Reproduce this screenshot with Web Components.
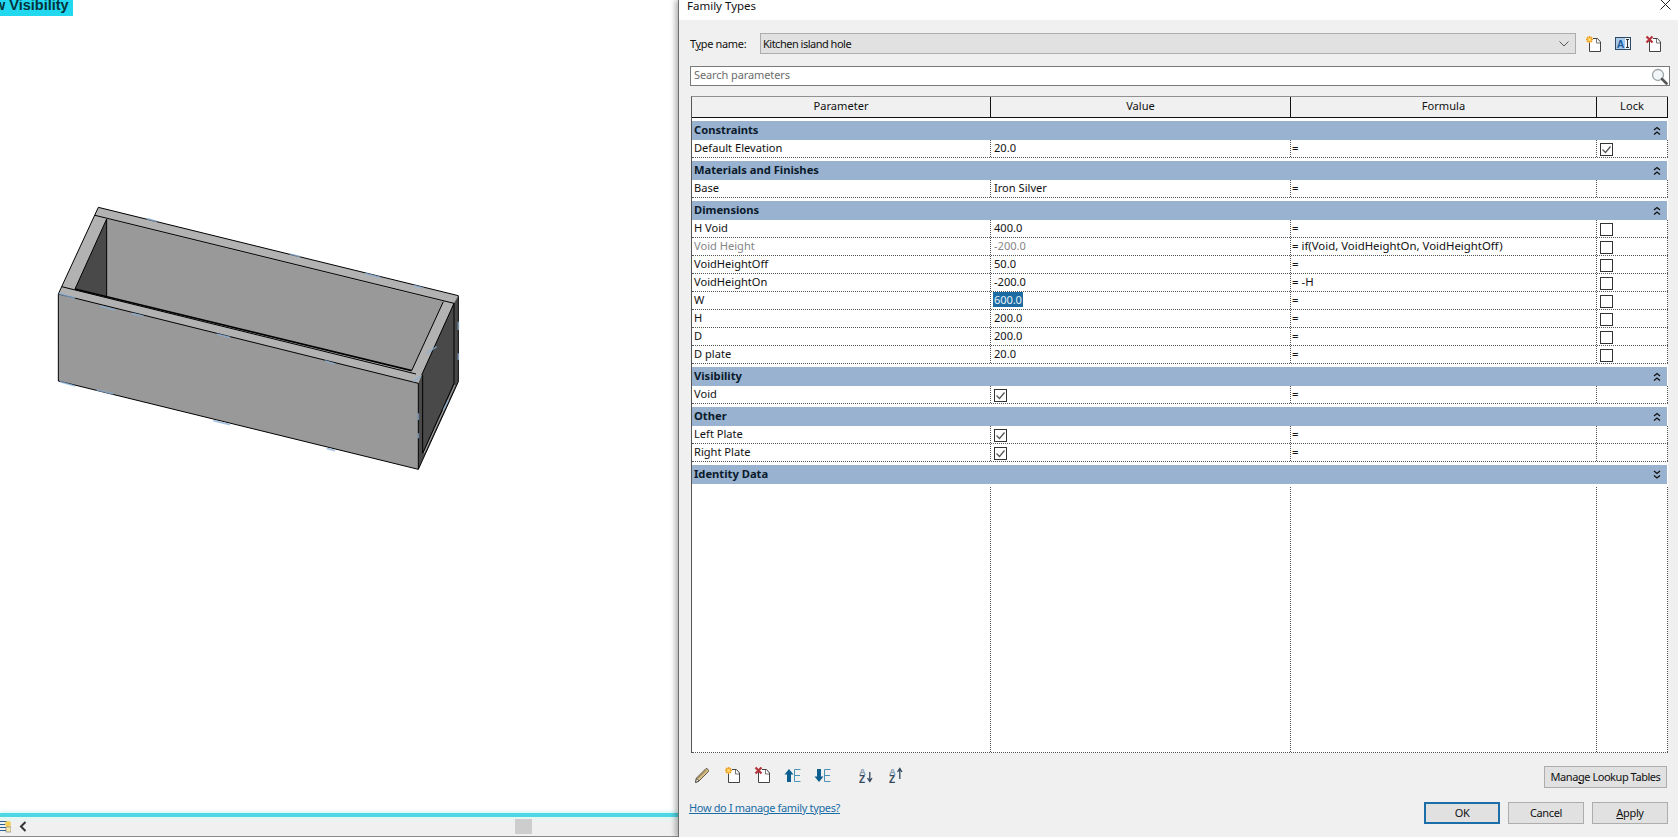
<!DOCTYPE html>
<html>
<head>
<meta charset="utf-8">
<title>Family Types</title>
<style>
  html, body { margin: 0; height: 100%; background: #fff; overflow: hidden; }
  body { font-family: "Noto Sans", "Open Sans", sans-serif; font-size: 11.100px; color: #111; }
</style>
</head>
<body>
<app-window>
  <model-view slot="left"></model-view>
  <family-types slot="right">
    <ft-group title="Constraints"></ft-group>
    <ft-row label="Default Elevation" value="20.0" formula="=" lock="on"></ft-row>
    <ft-group title="Materials and Finishes" class="next"></ft-group>
    <ft-row label="Base" value="Iron Silver" formula="=" lock="none"></ft-row>
    <ft-group title="Dimensions" class="next"></ft-group>
    <ft-row label="H Void" value="400.0" formula="=" lock="off"></ft-row>
    <ft-row label="Void Height" value="-200.0" formula="= if(Void, VoidHeightOn, VoidHeightOff)" lock="off" disabled></ft-row>
    <ft-row label="VoidHeightOff" value="50.0" formula="=" lock="off"></ft-row>
    <ft-row label="VoidHeightOn" value="-200.0" formula="= -H" lock="off"></ft-row>
    <ft-row label="W" value="600.0" formula="=" lock="off" selected></ft-row>
    <ft-row label="H" value="200.0" formula="=" lock="off"></ft-row>
    <ft-row label="D" value="200.0" formula="=" lock="off"></ft-row>
    <ft-row label="D plate" value="20.0" formula="=" lock="off"></ft-row>
    <ft-group title="Visibility" class="next"></ft-group>
    <ft-row label="Void" check formula="=" lock="none"></ft-row>
    <ft-group title="Other" class="next"></ft-group>
    <ft-row label="Left Plate" check formula="=" lock="none"></ft-row>
    <ft-row label="Right Plate" check formula="=" lock="none"></ft-row>
    <ft-group title="Identity Data" class="next" collapsed></ft-group>
  </family-types>
</app-window>

<script>
const ICONS = {
  add: `<svg width="16" height="18" viewBox="0 0 16 18"><path d="M4.500 5.500V16.500H15.500V7L12.500 3.500H8" fill="#fff" stroke="#444"/><path d="M11.500 4V8H15" fill="none" stroke="#777"/><g stroke="#f0a01e" stroke-width="1.500"><path d="M1 4.500H8M4.500 1V8M2 2L7 7M7 2L2 7"/></g><circle cx="4.500" cy="4.500" r="1.500" fill="#ffe070"/></svg>`,
  remove: `<svg width="16" height="18" viewBox="0 0 16 18"><path d="M4.500 5.500V16.500H15.500V7L12.500 3.500H8" fill="#fff" stroke="#444"/><path d="M11.500 4V8H15" fill="none" stroke="#777"/><path d="M1.500 1.500L7.500 7.500M7.500 1.500L1.500 7.500" stroke="#b5343c" stroke-width="2.200"/></svg>`,
  rename: `<svg width="16" height="14" viewBox="0 0 16 14"><rect x=".5" y=".5" width="15" height="12" fill="#a9c9ea" stroke="#2c4a66"/><rect x="10" y="1" width="5" height="11" fill="#eef3f8"/><text x="1.800" y="10.800" font-family="Liberation Sans" font-weight="700" font-size="10.500" fill="#1a5c9c">A</text><path d="M11 2.500H14M12.500 2.500V10.500M11 10.500H14" stroke="#333" fill="none"/></svg>`,
  search: `<svg width="17" height="17" viewBox="0 0 17 17"><circle cx="7" cy="7" r="5.500" fill="#f2f6f8" stroke="#9aa3a8" stroke-width="1.300"/><path d="M11 11L15.500 15.500" stroke="#555" stroke-width="2.600" stroke-linecap="round"/></svg>`,
  pencil: `<svg width="16" height="17" viewBox="0 0 16 17"><path d="M1.500 15.500L2.500 11L12 1.500C13 1 15 3 14.500 4.500L5 14Z" fill="#d8bf86" stroke="#5f5a50"/><path d="M2.500 11L5 14L1.500 15.500Z" fill="#efe6d2" stroke="#5f5a50"/><path d="M4 11L12.500 3" stroke="#8e7a4c"/></svg>`,
  up: `<svg width="17" height="15" viewBox="0 0 17 15"><path d="M5 1L9.500 6.500H7V14H3V6.500H.5Z" fill="#0c5f8e"/><path d="M16.500 1.500H10.500V13.500H16.500M10.500 7.500H16" fill="none" stroke="#4a93b8"/></svg>`,
  down: `<svg width="17" height="15" viewBox="0 0 17 15"><path d="M5 14L9.500 8.500H7V1H3V8.500H.5Z" fill="#0c5f8e"/><path d="M16.500 1.500H10.500V13.500H16.500M10.500 7.500H16" fill="none" stroke="#4a93b8"/></svg>`,
  az: `<svg width="14" height="22" viewBox="0 -3 14 22"><text x="0" y="7.500" font-family="Liberation Sans" font-weight="700" font-size="9.500" fill="#7e97ad">A</text><text x="0" y="15.800" font-family="Liberation Sans" font-weight="700" font-size="10" fill="#33485c">Z</text><path d="M10.800 5V14M8.500 11L10.800 14.500L13 11" fill="none" stroke="#33485c" stroke-width="1.300"/></svg>`,
  za: `<svg width="14" height="22" viewBox="0 -3 14 22"><text x="0" y="7.500" font-family="Liberation Sans" font-weight="700" font-size="9.500" fill="#7e97ad">A</text><text x="0" y="15.800" font-family="Liberation Sans" font-weight="700" font-size="10" fill="#33485c">Z</text><path d="M10.800 12V2M8.500 5L10.800 1.500L13 5" fill="none" stroke="#33485c" stroke-width="1.300"/></svg>`
};

class FtIcon extends HTMLElement {
  constructor() {
    super();
    this.attachShadow({mode: 'open'});
  }
  connectedCallback() {
    this.shadowRoot.innerHTML = `
      <style>
        :host { display: flex; align-items: center; justify-content: center; width: 30px; height: 22px; }
        svg { display: block; }
      </style>
      ${ICONS[this.getAttribute('name')]}
    `;
  }
}
customElements.define('ft-icon', FtIcon);

class FtCheck extends HTMLElement {
  constructor() {
    super();
    this.attachShadow({mode: 'open'});
  }
  connectedCallback() {
    const tick = this.hasAttribute('checked')
      ? '<path d="M2.500 6.500L5.500 9.500L10.500 3.500" fill="none" stroke="#555" stroke-width="1.300"/>' : '';
    this.shadowRoot.innerHTML = `
      <style>
        :host { display: block; width: 13px; height: 13px; margin-top: 4px; }
        svg { display: block; }
      </style>
      <svg width="13" height="13" viewBox="0 0 13 13"><rect x=".5" y=".5" width="12" height="12" fill="#fff" stroke="#333"/>${tick}</svg>
    `;
  }
}
customElements.define('ft-check', FtCheck);

class FtGroup extends HTMLElement {
  constructor() {
    super();
    this.attachShadow({mode: 'open'});
  }
  connectedCallback() {
    const d = this.hasAttribute('collapsed')
      ? 'M1 1L4 3.500L7 1M1 5.500L4 8L7 5.500'
      : 'M1 4L4 1.500L7 4M1 8.500L4 6L7 8.500';
    this.shadowRoot.innerHTML = `
      <style>
        :host {
          display: flex; align-items: center; justify-content: space-between;
          height: 19px; background: #98b2cf; padding: 0 6px 0 2px; box-sizing: border-box;
          font-weight: 700; font-size: 11.200px; color: #0b1a2b; line-height: 16px; margin-right: 1px;
        }
        :host(.next) { margin-top: 3px; }
        span { margin-top: -2px; }
        svg { display: block; }
      </style>
      <span>${this.getAttribute('title')}</span>
      <svg width="8" height="10" viewBox="0 0 8 10"><path d="${d}" fill="none" stroke="#111" stroke-width="1.300"/></svg>
    `;
  }
}
customElements.define('ft-group', FtGroup);

class FtRow extends HTMLElement {
  constructor() {
    super();
    this.attachShadow({mode: 'open'});
  }
  connectedCallback() {
    const lock = this.getAttribute('lock');
    let value = this.getAttribute('value') || '';
    if (this.hasAttribute('selected')) value = `<span class="sel">${value}</span>`;
    if (this.hasAttribute('check')) value = '<ft-check checked></ft-check>';
    const lockBox = lock === 'none' ? '' : `<ft-check ${lock === 'on' ? 'checked' : ''}></ft-check>`;
    this.shadowRoot.innerHTML = `
      <style>
        :host {
          display: grid; grid-template-columns: var(--ft-cols); height: 18px;
          border-bottom: 1px dotted #555; box-sizing: border-box; line-height: 15px;
          white-space: nowrap; letter-spacing: 0;
        }
        :host([disabled]) { color: #868686; }
        :host([disabled]) .formula { color: #111; }
        .cell { display: flex; align-items: center; padding: 0 0 2px 2px; overflow: hidden; }
        .cell + .cell { border-left: 1px dotted #555; }
        .value { padding-left: 3px; }
        .formula { padding-left: 1px; font-size: 11.400px; }
        .lock { padding-left: 3px; border-right: 1px dotted #555; }
        .sel { background: #1c6ca3; color: #e6f0f8; height: 15px; padding: 0 1px; margin-left: -1px; letter-spacing: -.1px; }
      </style>
      <div class="cell">${this.getAttribute('label')}</div>
      <div class="cell value">${value}</div>
      <div class="cell formula">${this.getAttribute('formula')}</div>
      <div class="cell lock">${lockBox}</div>
    `;
  }
}
customElements.define('ft-row', FtRow);

class FtButton extends HTMLElement {
  constructor() {
    super();
    this.attachShadow({mode: 'open'});
    this.shadowRoot.innerHTML = `
      <style>
        :host {
          display: flex; align-items: center; justify-content: center; box-sizing: border-box;
          height: 22px; width: 76px; background: #e1e1e1; border: 1px solid #adadad; color: #111;
          white-space: nowrap; padding-bottom: 2px;
        }
        :host([primary]) { border: 2px solid #1b6ea8; }
        :host([wide]) { width: 123px; letter-spacing: -.45px; }
      </style>
      <span><slot></slot></span>
    `;
  }
}
customElements.define('ft-button', FtButton);

class FamilyTypes extends HTMLElement {
  constructor() {
    super();
    this.attachShadow({mode: 'open'});
    this.shadowRoot.innerHTML = `
      <style>
        :host {
          display: flex; flex-direction: column; height: 100%; box-sizing: border-box;
          background: #f0f0f0; border-left: 1px solid #6e6e6e;
          box-shadow: -3px 0 5px rgba(0,0,0,.28); position: relative;
          --ft-cols: 298px 300px 306px 72px;
          font-size: 11px; letter-spacing: -.35px;
        }
        .title {
          display: flex; justify-content: space-between; height: 20px; background: #fff;
          padding: 0 7px 0 8px; line-height: 11px; overflow: hidden; font-size: 11.500px; letter-spacing: 0;
        }
        .title svg { display: block; margin-top: -1px; }
        .type { display: flex; align-items: center; height: 21px; margin: 13px 0 0 11px; }
        .type label { width: 70px; }
        .combo {
          flex: none; width: 816px; height: 21px; box-sizing: border-box; display: flex; align-items: center;
          justify-content: space-between; padding: 0 6px 0 2px; background: #e1e1e1; border: 1px solid #adadad;
          letter-spacing: -.5px;
        }
        .combo svg { display: block; }
        .tools { display: flex; margin-left: 2px; }
        .search {
          display: flex; align-items: center; justify-content: space-between; box-sizing: border-box;
          height: 20px; width: 980px; margin: 12px 0 0 11px; padding: 0 0 0 2px;
          background: #fff; border: 1px solid #7a7a7a; color: #6d6d6d; letter-spacing: -.1px;
        }
        .search span { margin-top: -3px; padding-left: 1px; }
        .table {
          display: flex; flex-direction: column; box-sizing: border-box; flex: none;
          width: 977px; height: 657px; margin: 10px 0 0 12px; background: #fff;
          border-top: 1px solid #909090; border-left: 1px solid #555;
          font-size: 11.100px; letter-spacing: 0;
        }
        .head { display: grid; grid-template-columns: var(--ft-cols); height: 21px; background: #f0f0f0; border-bottom: 1px solid #111; box-sizing: border-box; flex: none; margin-bottom: 3px; }
        .head div { text-align: center; line-height: 17px; border-left: 1px solid #111; }
        .head div:first-child { border-left: none; }
        .head div:last-child { border-right: 1px solid #111; }
        .filler {
          flex: 1; display: grid; grid-template-columns: var(--ft-cols); margin-top: 3px;
          border-bottom: 1px dotted #555;
        }
        .filler div { border-left: 1px dotted #555; }
        .filler div:first-child { border-left: none; }
        .filler div:last-child { border-right: 1px dotted #555; }
        .bar { display: flex; align-items: flex-start; justify-content: space-between; margin: 13px 11px 0 8px; height: 22px; }
        .bar-icons { display: flex; margin-top: -2px; }
        .gap { width: 14px; }
        .actions { display: flex; justify-content: space-between; align-items: flex-start; margin: 14px 10px 0 10px; height: 22px; }
        .link { color: #1a6da6; text-decoration: underline; line-height: 12px; }
        .buttons { display: flex; gap: 8px; }
      </style>
      <div class="title">
        <span>Family Types</span>
        <svg width="11" height="11" viewBox="0 0 11 11"><path d="M.5 .5L10.500 10.500M10.500 .5L.5 10.500" stroke="#222"/></svg>
      </div>
      <div class="type">
        <label>T<u>y</u>pe name:</label>
        <div class="combo">
          <span>Kitchen island hole</span>
          <svg width="10" height="6" viewBox="0 0 10 6"><path d="M.5 .5L5 5L9.500 .5" fill="none" stroke="#555"/></svg>
        </div>
        <div class="tools">
          <ft-icon name="add"></ft-icon>
          <ft-icon name="rename"></ft-icon>
          <ft-icon name="remove"></ft-icon>
        </div>
      </div>
      <div class="search"><span>Search parameters</span><ft-icon name="search" style="width:20px;height:18px"></ft-icon></div>
      <div class="table">
        <div class="head"><div>Parameter</div><div>Value</div><div>Formula</div><div>Lock</div></div>
        <slot></slot>
        <div class="filler"><div></div><div></div><div></div><div></div></div>
      </div>
      <div class="bar">
        <div class="bar-icons">
          <ft-icon name="pencil"></ft-icon>
          <ft-icon name="add"></ft-icon>
          <ft-icon name="remove"></ft-icon>
          <ft-icon name="up"></ft-icon>
          <ft-icon name="down"></ft-icon>
          <span class="gap"></span>
          <ft-icon name="az"></ft-icon>
          <ft-icon name="za"></ft-icon>
        </div>
        <ft-button wide>Mana<u>g</u>e Lookup Tables</ft-button>
      </div>
      <div class="actions">
        <span class="link">How do I manage family types?</span>
        <div class="buttons">
          <ft-button primary>OK</ft-button>
          <ft-button>Cancel</ft-button>
          <ft-button><u>A</u>pply</ft-button>
        </div>
      </div>
    `;
  }
}
customElements.define('family-types', FamilyTypes);

class ModelView extends HTMLElement {
  constructor() {
    super();
    this.attachShadow({mode: 'open'});
    this.shadowRoot.innerHTML = `
      <style>
        :host { display: flex; flex-direction: column; height: 100%; background: #fff; overflow: hidden; position: relative; }
        .tag {
          position: absolute; left: 0; top: 0;
          width: 73px; height: 16px; background: #22d8ee; overflow: hidden; white-space: nowrap;
          font: 700 14.500px/10px "Liberation Sans", sans-serif; color: #05323a; text-indent: -6px;
        }
        .canvas { flex: 1; min-height: 0; }
        .canvas svg { display: block; }
        .line { flex: none; height: 4px; background: #4dd6e4; box-shadow: 0 -2px 3px rgba(77,214,228,.2); }
        .status {
          flex: none; height: 20px; box-sizing: border-box; display: flex; align-items: center;
          background: linear-gradient(#e2f7f3, #f0f0f0 6px); border-bottom: 1px solid #8a8a8a;
        }
        .status svg { display: block; flex: none; }
        .thumb { width: 17px; height: 15px; background: #cdcdcd; margin-left: 488px; }
        .chev { margin-left: 8px; }
      </style>
      <div class="canvas">
        <svg width="500" height="480" viewBox="0 0 1500 1440" stroke-linejoin="round">
          <path d="M295 622L1375 887L1255 1150L175 882L185 860Z" fill="#b2b2b2"/>
          <path d="M320 657L1330 905L1235 1112L320 890Z" fill="#999"/>
          <path d="M320 657L225 867L320 890Z" fill="#494949"/>
          <path d="M175 882L1255 1150V1408L175 1143Z" fill="#999"/>
          <path d="M1265 1125L1362 910L1375 887V1145L1255 1408V1150Z" fill="#494949"/>
          <g fill="none" stroke="#000" stroke-width="3">
            <path d="M295 622L1375 887V1145L1255 1408L175 1143V882L185 860L295 622"/>
            <path d="M285 646L1362 910L1265 1125"/>
            <path d="M185 860L1248 1122M175 882L1255 1150V1408"/>
            <path d="M320 657V890M320 657L225 867M1330 905L1235 1112"/>
            <path d="M1268 1125V1360L1362 1150V910"/>
          </g>
          <path d="M225 867L1235 1112" fill="none" stroke="#000" stroke-width="5"/>
          <path d="M1272 1360L1365 1155" fill="none" stroke="#d8d8d8" stroke-width="2"/>
          <g fill="none" stroke="#8cb0d6" stroke-width="5" opacity=".75">
            <path d="M176 880L225 895M300 918L345 930M395 940L430 948M650 1002L690 1012M975 1082L1005 1092M1240 1145L1262 1128"/>
            <path d="M440 656L470 664M870 762L900 770M1095 820L1140 832M1240 856L1270 864"/>
            <path d="M180 1145L225 1158M290 1170L340 1182M640 1262L690 1274M980 1345L1005 1352"/>
            <path d="M1375 965V990M1375 1060V1080M1255 1240V1260M1255 1300V1315M1280 1060L1310 1040M1345 1200L1330 1230"/>
          </g>
        </svg>
      </div>
      <div class="tag">w Visibility</div>
      <div class="line"></div>
      <div class="status">
        <svg width="11" height="15" viewBox="0 0 11 15"><path d="M0 2.500H7M0 5.500H7M0 8.500H7M0 11.500H7" stroke="#2d5f8c"/><circle cx="8" cy="5" r="3" fill="#f2cf5a"/><rect x="6" y="8" width="5" height="5" fill="#f7e7a8" stroke="#777" stroke-width=".6"/></svg>
        <svg class="chev" width="8" height="11" viewBox="0 0 8 11"><path d="M6.500 1L2 5.500L6.500 10" fill="none" stroke="#333" stroke-width="2"/></svg>
        <div class="thumb"></div>
      </div>
    `;
  }
}
customElements.define('model-view', ModelView);

class AppWindow extends HTMLElement {
  constructor() {
    super();
    this.attachShadow({mode: 'open'});
    this.shadowRoot.innerHTML = `
      <style>
        :host { display: grid; grid-template-columns: 678px 1000px; height: 837px; width: 1678px; overflow: hidden; }
      </style>
      <slot name="left"></slot>
      <slot name="right"></slot>
    `;
  }
}
customElements.define('app-window', AppWindow);
</script>
</body>
</html>
